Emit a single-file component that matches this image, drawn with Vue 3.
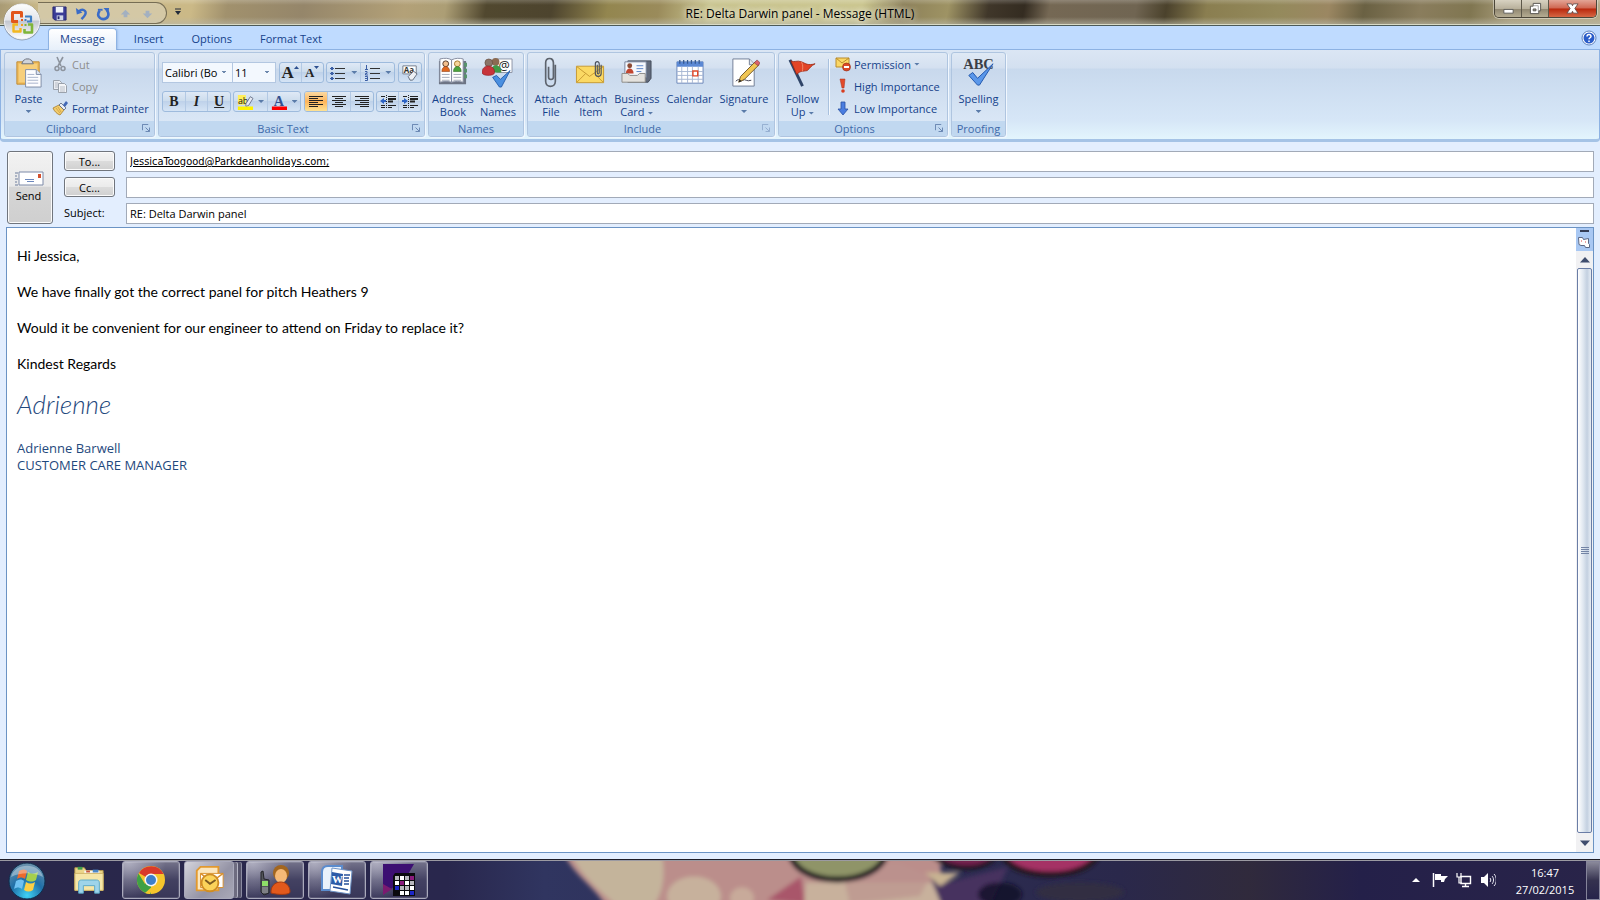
<script setup>
import { ref } from 'vue'

const tabs = ['Message', 'Insert', 'Options', 'Format Text']
const activeTab = ref('Message')
const font = ref('Calibri (Bo')
const size = ref('11')
const to = ref('JessicaToogood@Parkdeanholidays.com;')
const cc = ref('')
const subject = ref('RE: Delta Darwin panel')
const paragraphs = [
  'Hi Jessica,',
  'We have finally got the correct panel for pitch Heathers 9',
  'Would it be convenient for our engineer to attend on Friday to replace it?',
  'Kindest Regards',
]
</script>

<template>
  <div class="window">
    <header class="titlebar">
      <button class="orb" aria-label="Office Button">
        <svg viewBox="0 0 40 40" width="40" height="40">
          <defs>
            <linearGradient id="orbFill" x1="0" y1="0" x2="0" y2="1">
              <stop offset="0" stop-color="#fdfdfd" /><stop offset=".45" stop-color="#e3e5ea" />
              <stop offset=".5" stop-color="#c4c8d1" /><stop offset="1" stop-color="#fff" />
            </linearGradient>
          </defs>
          <circle cx="20" cy="20" r="18.5" fill="#6f7684" opacity=".6" />
          <circle cx="20" cy="19.5" r="17.5" fill="url(#orbFill)" stroke="#f5f6f8" />
          <g fill="none" stroke-linejoin="round">
            <path d="M16 19.500H10.500V10.500h9v5" stroke="#e2561c" stroke-width="3" />
            <path d="M16 22.500h-4.500v7h7V26" stroke="#f3b81f" stroke-width="2.400" />
            <path d="M23 14.500h6v5h-4" stroke="#3f7fc4" stroke-width="2.200" />
            <path d="M26 22.500h4v8h-7.500V27" stroke="#7fb53a" stroke-width="2.600" />
          </g>
          <path d="M19 17h2v2h-2z" fill="#e2561c" /><path d="M22.500 17h2v2h-2z" fill="#3f7fc4" /><path d="M19 22h2v2h-2z" fill="#f3a01f" /><path d="M22.500 22h2v2h-2z" fill="#7fb53a" />
        </svg>
      </button>
      <nav class="quick" aria-label="Quick Access Toolbar">
        <button aria-label="Save">
          <svg viewBox="0 0 16 16"><path d="M1 1h14v14H3l-2-2z" fill="#3a3b96" stroke="#26276f" /><path d="M4 1h8v6H4z" fill="#eef1fa" /><path d="M5 10h7v5H5z" fill="#cfd5e8" /><path d="M6 11h2v3H6z" fill="#26276f" /></svg>
        </button>
        <button aria-label="Undo">
          <svg viewBox="0 0 16 16"><path d="M5 6c4-4 9-1 7 3-1 2-2 3-4 5" fill="none" stroke="#3b6cc7" stroke-width="2.6" /><path d="M2 2l1 7 6-2z" fill="#3b6cc7" /></svg>
        </button>
        <button aria-label="Redo">
          <svg viewBox="0 0 16 16"><path d="M4 5c-4 5 0 9 4 9s7-4 4-9" fill="none" stroke="#3b6cc7" stroke-width="2.8" /><path d="M8 2h6l-1 6z" fill="#3b6cc7" /><path d="M2 3h5v2H2z" fill="#3b6cc7" /></svg>
        </button>
        <button aria-label="Previous Item" disabled>
          <svg viewBox="0 0 16 16"><path d="M8 4l5 5h-3v3H6V9H3z" fill="#a3b0c0" /></svg>
        </button>
        <button aria-label="Next Item" disabled>
          <svg viewBox="0 0 16 16"><path d="M8 13L3 8h3V5h4v3h3z" fill="#a3b0c0" /></svg>
        </button>
      </nav>
      <button class="quick-more" aria-label="Customize Quick Access Toolbar">
        <svg viewBox="0 0 8 8" width="8" height="8"><path d="M1 1h6" stroke="#222b3a" /><path d="M1 3h6L4 7z" fill="#222b3a" /></svg>
      </button>
      <h1>RE: Delta Darwin panel - Message (HTML)</h1>
      <div class="controls">
        <button aria-label="Minimize"><svg viewBox="0 0 14 14"><path d="M2 8h10v4H2z" fill="#fff" stroke="#5c5a55" /></svg></button>
        <button aria-label="Restore"><svg viewBox="0 0 14 14"><path d="M4.500 1.500h8v8h-2v3h-9v-8h3z" fill="#fff" stroke="#55534e" /><path d="M4.500 7.500h3v2h-3z" fill="#9b968a" stroke="#55534e" /><path d="M5 4h5v6" fill="none" stroke="#777" stroke-width=".7" /></svg></button>
        <button class="close" aria-label="Close"><svg viewBox="0 0 14 14"><path d="M1 2h5l1 2 1-2h5L9.500 7l3.500 5H8l-1-2-1 2H1l3.500-5z" fill="#fff" stroke="#5c4644" stroke-width=".9" /></svg></button>
      </div>
    </header>

    <nav class="tabs">
      <button v-for="t in tabs" :key="t" :class="{ active: t === activeTab }" @click="activeTab = t">{{ t }}</button>
      <button class="help" aria-label="Help">
        <svg viewBox="0 0 16 16" width="16" height="16"><circle cx="8" cy="8" r="7" fill="#fff" stroke="#5f82bd" /><circle cx="8" cy="8" r="5.500" fill="#2a5cc9" /><path d="M6 6.500c0-3 4.200-2.500 4 0-.2 1.300-2 1.300-2 2.800M8 10.500v1.500" fill="none" stroke="#fff" stroke-width="1.500" /></svg>
      </button>
    </nav>

    <div class="ribbon">
      <section class="group clipboard">
        <div class="content">
          <button class="big">
            <svg viewBox="0 0 32 32">
              <path d="M4 5h23v23H4z" fill="#f0bd5c" stroke="#c08a35" /><path d="M6 7h19v19H6z" fill="#f7cf7c" />
              <path d="M10 5c0-2 3-2 3-3h4c0 1 3 1 3 3l1 2H9z" fill="#cfd3da" stroke="#6c727d" />
              <path d="M13 13h11l5 5v13H13z" fill="#fdfdff" stroke="#7f8ca6" /><path d="M24 13v5h5" fill="#dbe3f2" stroke="#7f8ca6" />
              <path d="M15 18h7M15 21h11M15 24h11M15 27h11" stroke="#a8b4cb" />
            </svg>
            <span>Paste</span><i class="caret"></i>
          </button>
          <div class="stack">
            <button disabled>
              <svg viewBox="0 0 16 16"><path d="M5 1l4 9M11 1L6 10" stroke="#8d949e" stroke-width="1.600" /><circle cx="5" cy="12.500" r="2" fill="none" stroke="#8d949e" stroke-width="1.500" /><circle cx="11" cy="12.500" r="2" fill="none" stroke="#8d949e" stroke-width="1.500" /></svg>
              Cut
            </button>
            <button disabled>
              <svg viewBox="0 0 16 16"><path d="M1.500 2.500h6l2 2v7h-8z" fill="#e9ecf1" stroke="#9aa1ab" /><path d="M6.500 5.500h6l2 2v7h-8z" fill="#f4f5f8" stroke="#9aa1ab" /><path d="M3 5h3M3 7h3M3 9h3M8 9h5M8 11h5M8 13h5" stroke="#a9b0ba" stroke-width=".8" /></svg>
              Copy
            </button>
            <button>
              <svg viewBox="0 0 16 16"><path d="M1 8l6-3 5 5-4 5c-3-1-6-4-7-7z" fill="#f3cd6d" stroke="#a67c2c" stroke-width=".8" /><path d="M7 5l2-2 5 5-2 2z" fill="#e9edf5" stroke="#56627c" stroke-width=".8" /><path d="M11 5l3-4 2 2-3 4z" fill="#4167b5" /><path d="M4 8l4 5M6 7l3 5" stroke="#c6963c" stroke-width=".7" /></svg>
              Format Painter
            </button>
          </div>
        </div>
        <footer class="expands">Clipboard<svg class="launcher" viewBox="0 0 9 9"><path d="M.5 7V.5H7M4 4l4 4M8.500 4v4.500H4" /></svg></footer>
      </section>

      <section class="group basic">
        <div class="content">
          <div class="row">
            <div class="pickers">
              <select v-model="font" class="font" aria-label="Font"><option>Calibri (Bo</option></select>
              <select v-model="size" class="size" aria-label="Font size"><option>11</option></select>
            </div>
            <div class="cluster grow">
              <button aria-label="Grow Font" class="serif"><b class="lg">A</b><svg class="tip" viewBox="0 0 5 3"><path d="M0 3h5L2.500 0z" fill="#2d4f8f" /></svg></button>
              <button aria-label="Shrink Font" class="serif"><b class="sm">A</b><svg class="tip" viewBox="0 0 5 3"><path d="M0 0h5L2.500 3z" fill="#2d4f8f" /></svg></button>
            </div>
            <div class="cluster lists">
              <button aria-label="Bullets"><svg viewBox="0 0 16 16"><path d="M5 3.500h10M5 8.500h10M5 13.500h10" stroke="#333" /><path d="M1 2h2v3H1zM0 3h4v1H0zM1 7h2v3H1zM0 8h4v1H0zM1 12h2v3H1zM0 13h4v1H0z" fill="#3c5fa5" /></svg><i class="caret"></i></button>
              <button aria-label="Numbering"><svg viewBox="0 0 16 16"><path d="M6 3.500h10M6 8.500h10M6 13.500h10" stroke="#333" /><path d="M2.500 0v4M1 4.500h3M1 6.500h2v2H1.500v1.500H4M1 11.500h2.500v4H1M1 13.500h2" fill="none" stroke="#3c5fa5" /></svg><i class="caret"></i></button>
            </div>
            <div class="cluster clear">
              <button aria-label="Clear Formatting"><svg viewBox="0 0 18 18"><path d="M1 1h15v9H1z" fill="#fff" stroke="#6d7585" /><text x="2" y="9" font-size="9" font-weight="700" fill="#333">Aa</text><path d="M7 13l6-6 4 3-5 7H9z" fill="#eef0f5" stroke="#5e6675" /></svg></button>
            </div>
          </div>
          <div class="row">
            <div class="cluster biu">
              <button aria-label="Bold" class="serif"><b>B</b></button>
              <button aria-label="Italic" class="serif"><b><em>I</em></b></button>
              <button aria-label="Underline" class="serif"><b><u>U</u></b></button>
            </div>
            <div class="cluster colors">
              <button aria-label="Highlight"><svg viewBox="0 0 18 18"><path d="M1 1h9v11H1z" fill="#ffef5a" /><text x="1" y="11" font-size="10" fill="#111">ab</text><path d="M10 11l5-8 3 2-5 8-3 1z" fill="#e6eaf2" stroke="#59627a" stroke-width=".9" /><path d="M1 14h17v4H1z" fill="#fff200" /></svg><i class="caret"></i></button>
              <button aria-label="Font Color"><svg viewBox="0 0 18 18"><text x="3" y="13" font-size="16" font-weight="700" fill="#34518f" class="glyph">A</text><path d="M1 14h17v4H1z" fill="#f00" /></svg><i class="caret"></i></button>
            </div>
            <div class="cluster align">
              <button aria-label="Align Left" class="on"><svg viewBox="0 0 16 14"><path d="M1 1.500h14M1 3.500h9M1 5.500h14M1 7.500h9M1 9.500h14M1 11.500h9" stroke="#222" /></svg></button>
              <button aria-label="Center"><svg viewBox="0 0 16 14"><path d="M1 1.500h14M4 3.500h8M1 5.500h14M4 7.500h8M1 9.500h14M4 11.500h8" stroke="#222" /></svg></button>
              <button aria-label="Align Right"><svg viewBox="0 0 16 14"><path d="M1 1.500h14M6 3.500h9M1 5.500h14M6 7.500h9M1 9.500h14M6 11.500h9" stroke="#222" /></svg></button>
            </div>
            <div class="cluster indent">
              <button aria-label="Decrease Indent"><svg viewBox="0 0 16 14"><path d="M1 1.500h4M8 1.500h8M8 4h8M8 6.500h5M1 10.500h4M8 10.500h8M1 12.500h4M8 12.500h4" stroke="#222" /><path d="M8 4h8M8 6.500h5" stroke="#222" stroke-width="2" /><path d="M6.500 0v14" stroke="#222" stroke-dasharray="1 1" /><path d="M0 6l4-3v2h2v2H4v2z" fill="#2d63c4" /></svg></button>
              <button aria-label="Increase Indent"><svg viewBox="0 0 16 14"><path d="M1 1.500h4M8 1.500h8M8 4h8M8 6.500h5M1 10.500h4M8 10.500h8M1 12.500h4M8 12.500h4" stroke="#222" /><path d="M8 4h8M8 6.500h5" stroke="#222" stroke-width="2" /><path d="M6.500 0v14" stroke="#222" stroke-dasharray="1 1" /><path d="M6 6L2 3v2H0v2h2v2z" fill="#2d63c4" /></svg></button>
            </div>
          </div>
        </div>
        <footer class="expands">Basic Text<svg class="launcher" viewBox="0 0 9 9"><path d="M.5 7V.5H7M4 4l4 4M8.500 4v4.500H4" /></svg></footer>
      </section>

      <section class="group names">
        <div class="content">
          <button class="big">
            <svg viewBox="0 0 32 32">
              <path d="M2 4h28v24H2z" fill="#6d7484" /><path d="M28 6h3v4h-3zM28 12h3v4h-3zM28 18h3v4h-3z" fill="#57946b" />
              <path d="M3 2c5-1 9-1 12 1v23c-3-1-8-1-12 0zM15 3c4-2 8-2 12-1v24c-4-1-8-1-12 0z" fill="#fff" stroke="#868da0" />
              <path d="M5 18h8M5 21h8M5 24h8M17 18h8M17 21h8M17 24h8" stroke="#a2a9b8" />
              <circle cx="9" cy="7" r="3" fill="#f3c08d" stroke="#553b2c" /><path d="M5 15c0-7 8-7 8 0z" fill="#e0671d" stroke="#8b3c12" stroke-width=".6" />
              <circle cx="21" cy="7" r="3" fill="#f6d59b" stroke="#a57a2c" /><path d="M17 15c0-7 8-7 8 0z" fill="#4ba33c" stroke="#2a6c21" stroke-width=".6" />
            </svg>
            <span>Address<br>Book</span>
          </button>
          <button class="big">
            <svg viewBox="0 0 32 32">
              <path d="M15 2h16v14H15z" fill="#fff" stroke="#8e96a7" /><text x="17" y="13" font-size="13" fill="#222">@</text>
              <circle cx="14" cy="5" r="4" fill="#8b6a52" /><path d="M9 16c0-10 11-10 11 0z" fill="#3f9a46" />
              <circle cx="7" cy="6" r="4" fill="#8a7468" stroke="#5d4233" stroke-width=".6" /><path d="M0 16c0-9 13-9 13 0 0 4-13 4-13 0z" fill="#c7343a" stroke="#8b2025" stroke-width=".6" />
              <path d="M11 21l4-2 4 4 10-9-9 17h-2z" fill="#4a8fe0" stroke="#1f58a8" stroke-width=".9" />
            </svg>
            <span>Check<br>Names</span>
          </button>
        </div>
        <footer>Names</footer>
      </section>

      <section class="group include">
        <div class="content">
          <button class="big">
            <svg viewBox="0 0 32 32"><path d="M14 10v11c0 3 5 3 5 0V6c0-6-8-6-8 0v19c0 7 10 7 10 0V8" fill="none" stroke="#5d636d" stroke-width="1.700" /></svg>
            <span>Attach<br>File</span>
          </button>
          <button class="big">
            <svg viewBox="0 0 32 32"><path d="M1.500 9.500h28v17h-28z" fill="#fbd964" stroke="#c79a33" /><path d="M2 10l13 10L29 10M2 26l9-9M29 26l-9-9" fill="none" stroke="#c79a33" /><path d="M23 8v8c0 2 2 2 2 0V7c0-3-4-3-4 0v10c0 4 6 4 6 0V8" fill="none" stroke="#4b525e" stroke-width="1.200" /></svg>
            <span>Attach<br>Item</span>
          </button>
          <button class="big">
            <svg viewBox="0 0 32 32"><path d="M7 4h24v18l-3 4H7z" fill="#626b7c" stroke="#454d5c" /><path d="M4 5h22v16H4z" fill="#f5f8fd" stroke="#76829b" /><circle cx="9" cy="9" r="2.500" fill="#8b4b35" /><path d="M5 17c0-7 8-7 8 0z" fill="#c2452f" /><path d="M16 9h7M16 12h7M16 15h5" stroke="#5c86c8" /><path d="M1 17h6l2 2h8l2-2h6v9H1z" fill="#e4e2de" stroke="#8d8b88" /></svg>
            <span>Business<br>Card <i class="caret"></i></span>
          </button>
          <button class="big">
            <svg viewBox="0 0 32 32"><path d="M3 5h27v22H3z" fill="#fff" stroke="#6b86b9" /><path d="M3 5h27v5H3z" fill="#5b88d4" /><path d="M6 3v4M10 3v4M14 3v4M18 3v4M22 3v4M26 3v4" stroke="#35588f" stroke-width="1.300" /><path d="M3 15h27M3 19h27M3 23h27M8 10v17M14 10v17M19 10v17M25 10v17" stroke="#a8b8d4" /><path d="M19.500 14.500h5v5h-5z" fill="#fff" stroke="#e0482a" stroke-width="1.500" /></svg>
            <span>Calendar</span>
          </button>
          <button class="big">
            <svg viewBox="0 0 32 32"><path d="M4 2h17l5 5v23H4z" fill="#fff" stroke="#737f97" /><path d="M21 2v6h5" fill="#dfe5f0" stroke="#737f97" /><path d="M7 25c4-4 4 1 7-1s4 2 9 0" fill="none" stroke="#445" /><path d="M10 26l2-6L27 5l4 3-15 15z" fill="#f1c653" stroke="#74592b" /><path d="M26 6l3-3 3 3-2 3z" fill="#d9606a" stroke="#7e3940" stroke-width=".6" /><path d="M10 26l1-3 2 2z" fill="#222" /></svg>
            <span>Signature</span><i class="caret"></i>
          </button>
        </div>
        <footer class="expands">Include<svg class="launcher dim" viewBox="0 0 9 9"><path d="M.5 7V.5H7M4 4l4 4M8.500 4v4.500H4" /></svg></footer>
      </section>

      <section class="group options">
        <div class="content">
          <button class="big">
            <svg viewBox="0 0 32 32"><path d="M3 3l13 27" stroke="#2f4468" stroke-width="3" /><path d="M4 4c4 2 6-1 11 1s6 4 14 2c-4 2-6 5-8 7-5 1-7 0-11 4z" fill="#e24527" stroke="#99260f" stroke-width=".8" /><path d="M15 5c2 4 1 7 1 10" stroke="#f08a6a" fill="none" /></svg>
            <span>Follow<br>Up <i class="caret"></i></span>
          </button>
          <div class="rule"></div>
          <div class="stack">
            <button>
              <svg viewBox="0 0 16 16"><path d="M1 2h13v9H1z" fill="#fbd766" stroke="#b98b2b" /><path d="M1 2l6 5 7-5" fill="none" stroke="#b98b2b" /><circle cx="11.500" cy="11" r="4" fill="#dd4826" stroke="#8d2a15" stroke-width=".6" /><path d="M9 10h5v2H9z" fill="#fff" /></svg>
              Permission<i class="caret"></i>
            </button>
            <button>
              <svg viewBox="0 0 16 16"><path d="M5 1h5L9 10H7z" fill="#e24a2b" stroke="#a9301a" stroke-width=".5" /><circle cx="8" cy="13" r="1.800" fill="#d73d20" /></svg>
              High Importance
            </button>
            <button>
              <svg viewBox="0 0 16 16"><path d="M6 2h4v7h3l-5 6-5-6h3z" fill="#4a7de0" stroke="#2a51a3" stroke-width=".8" /></svg>
              Low Importance
            </button>
          </div>
        </div>
        <footer class="expands">Options<svg class="launcher" viewBox="0 0 9 9"><path d="M.5 7V.5H7M4 4l4 4M8.500 4v4.500H4" /></svg></footer>
      </section>

      <section class="group proofing">
        <div class="content">
          <button class="big">
            <svg viewBox="0 0 32 32"><text x="16" y="12" font-size="15" font-weight="700" text-anchor="middle" fill="#3b3f47" class="glyph">ABC</text><path d="M6 19l4-3 5 6L31 7 17 29h-2z" fill="#5a97ea" stroke="#2157ab" /></svg>
            <span>Spelling</span><i class="caret"></i>
          </button>
        </div>
        <footer>Proofing</footer>
      </section>
    </div>

    <main>
      <form class="fields" @submit.prevent>
        <button class="send" type="submit">
          <svg viewBox="0 0 30 16" width="30" height="16"><path d="M5 1h24v13H5z" fill="#fff" stroke="#7c8aa8" /><path d="M1 2h3M1 5h2M1 8h3M1 11h2M1 14h3" stroke="#6d7c9c" /><path d="M24 3h3v4h-3z" fill="#d4502d" /><path d="M11 8.500h9M13 10.500h7" stroke="#6c88bd" /></svg>
          <span>Send</span>
        </button>
        <button id="to-label" class="pick" type="button">To...</button>
        <input v-model="to" class="recipient" aria-labelledby="to-label">
        <button id="cc-label" class="pick" type="button">Cc...</button>
        <input v-model="cc" aria-labelledby="cc-label">
        <label for="subject">Subject:</label>
        <input id="subject" v-model="subject">
      </form>
      <div class="editor">
        <article role="textbox" aria-label="Message body" aria-multiline="true">
          <p v-for="p in paragraphs" :key="p">{{ p }}</p>
          <p class="script">Adrienne</p>
          <p class="signoff">Adrienne Barwell<br>CUSTOMER CARE MANAGER</p>
        </article>
        <div class="scroll">
          <div class="split"><svg viewBox="0 0 16 22" width="16" height="22"><path d="M4 3h9" stroke="#333c55" stroke-width="2" /><path d="M2.500 9.500h4l1 2 5-1v5l1 1v3h-4l-1-2H5l-2-1z" fill="#fff" stroke="#5c6885" /><path d="M5 13h1M9 14h1" stroke="#d44" /></svg></div>
          <button aria-label="Scroll up"><svg viewBox="0 0 10 6" width="10" height="6"><path d="M0 5.500h10L5 0z" fill="#3f4d6e" /></svg></button>
          <div class="thumb"><i></i></div>
          <button aria-label="Scroll down"><svg viewBox="0 0 10 6" width="10" height="6"><path d="M0 .5h10L5 6z" fill="#3f4d6e" /></svg></button>
        </div>
      </div>
    </main>

    <footer class="taskbar">
      <svg class="wallpaper" viewBox="0 0 1600 40" preserveAspectRatio="none">
        <defs>
          <filter id="soft" x="-5%" y="-50%" width="110%" height="200%"><feGaussianBlur stdDeviation="2" /></filter>
          <linearGradient id="night"><stop offset="0" stop-color="#29274a" /><stop offset=".28" stop-color="#29274d" /><stop offset=".34" stop-color="#303560" /><stop offset=".7" stop-color="#2a284b" /><stop offset=".78" stop-color="#302a3c" /><stop offset=".85" stop-color="#242049" /><stop offset="1" stop-color="#292449" /></linearGradient>
        </defs>
        <rect width="1600" height="40" fill="url(#night)" />
        <g filter="url(#soft)">
          <path d="M565 -5h375l3 50H605c-10-18-28-28-40-50z" fill="#bb8e8b" />
          <path d="M572 -5h90c4 20 0 40-8 50h-38c-20-18-34-30-44-50z" fill="#c4b49b" />
          <ellipse cx="694" cy="36" rx="27" ry="20" fill="#c7b19c" />
          <ellipse cx="742" cy="38" rx="12" ry="11" fill="#c8aa9a" />
          <path d="M767 40l34-24 4 28z" fill="#a9566b" />
          <path d="M806 22l80 0 54 0v24H804z" fill="#c8b19c" />
          <path d="M840 2h60l30 14-10 20-70 8z" fill="#bb938e" opacity=".7" />
          <path d="M930 16l18 6 60-16-18 40H942z" fill="#46305f" />
          <path d="M925 12h35l-20 14z" fill="#c8b392" />
          <path d="M790 -8h96c-6 34-88 38-96 0z" fill="#8f9468" stroke="#17131a" stroke-width="6" />
          <path d="M932 -8h65c-8 20-50 20-65 0z" fill="#76244f" stroke="#1d1220" stroke-width="5" />
          <path d="M1002 -8h96c-8 28-86 30-96 0z" fill="#a53365" stroke="#20141f" stroke-width="6" />
          <ellipse cx="1000" cy="34" rx="22" ry="12" fill="#130d28" opacity=".8" />
          <ellipse cx="1080" cy="32" rx="44" ry="10" fill="#332f42" />
        </g>
      </svg>
      <button class="start" aria-label="Start">
        <svg viewBox="0 0 38 38" width="38" height="38">
          <defs><radialGradient id="startFill" cx=".5" cy=".9" r=".9"><stop offset="0" stop-color="#3fd2f6" /><stop offset=".5" stop-color="#1f6fa8" /><stop offset="1" stop-color="#6d93ad" /></radialGradient></defs>
          <circle cx="19" cy="19" r="18" fill="url(#startFill)" stroke="#0e2d4c" />
          <path d="M11 9c3-2 6-2 8 0l-2 8c-3-2-5-2-8 0z" fill="#ec6a2d" /><path d="M20 10c3 2 6 2 10 0l-2 8c-3 2-6 2-10 0z" fill="#a5cf4c" />
          <path d="M8 19c3-2 6-2 8 0l-2 8c-3-2-5-2-8 0z" fill="#6fc1f2" /><path d="M18 20c3 2 6 2 9 0l-2 8c-3 2-6 2-9 0z" fill="#fbcf45" />
          <path d="M3 15C7 0 31 0 35 15c-10-5-22-5-32 0z" fill="#fff" opacity=".35" />
        </svg>
      </button>
      <button class="task pinned" aria-label="Windows Explorer">
        <svg viewBox="0 0 34 32"><path d="M2 3h10l2 3h18v21H2z" fill="#ecd68a" stroke="#b79a4b" /><path d="M5 2h5v3H5z" fill="#3c9a4b" /><path d="M12 6h16v5H12z" fill="#f7f7f3" /><path d="M14 6h4v2h-4z" fill="#c9543c" /><path d="M21 5h6v3h-6z" fill="#4a86c8" /><path d="M2 9h30v18H2z" fill="#f6e6a8" stroke="#cfb467" /><path d="M6 30V19c0-2 1-3 3-3h16c2 0 3 1 3 3v11h-5v-8H11v8z" fill="#9ed4ea" stroke="#5aa7c6" /></svg>
      </button>
      <button class="task" aria-label="Google Chrome">
        <svg viewBox="0 0 32 32"><circle cx="16" cy="16" r="14" fill="#f5c52c" /><path d="M16 16L4 9a14 14 0 0 1 24.500 1H16z" fill="#d93a2b" /><path d="M16 16v14A14 14 0 0 1 3.500 9.500L10 20z" fill="#3fa045" /><path d="M20 20l-5 10a14 14 0 0 1-5-1z" fill="#f5c52c" /><circle cx="16" cy="16" r="6.500" fill="#f3f5f8" /><circle cx="16" cy="16" r="5" fill="#3d7fca" /></svg>
      </button>
      <button class="task current" aria-label="Outlook">
        <svg viewBox="0 0 34 32"><path d="M4 6l4-4h19v25H4z" fill="#fbe6bd" stroke="#e1992f" stroke-width="2" /><path d="M8 9h24v15H8z" fill="#fff" stroke="#d9902c" /><path d="M8 9l12 9L32 9" fill="none" stroke="#d9902c" stroke-width="1.500" /><circle cx="18" cy="19" r="9" fill="#fbd35a" stroke="#cf8d24" stroke-width="2" /><path d="M13 16l5 4 6-4" fill="none" stroke="#7b5a22" stroke-width="2" /></svg>
      </button>
      <button class="task" aria-label="Phone contacts">
        <svg viewBox="0 0 32 32"><circle cx="22" cy="9" r="8" fill="#a3661f" /><ellipse cx="22" cy="12" rx="6" ry="7" fill="#f5b977" /><path d="M12 29c-1-14 19-15 19-1 0 3-12 3-19 1z" fill="#e2591c" stroke="#a83b10" /><path d="M2 8l2-1 1 8 5 1v13l-5 2-3-3V14z" fill="#54565c" stroke="#232428" /><path d="M3 17h6v5H3z" fill="#8edf68" /><path d="M3 24h6M3 26h6M3 28h6" stroke="#a7a9ad" /></svg>
      </button>
      <button class="task" aria-label="Word">
        <svg viewBox="0 0 32 32"><path d="M1 8c0-4 2-6 6-6h14v24H1z" fill="#e9f1fb" stroke="#5b8cce" stroke-width="2" /><path d="M11 4l20 3-2 23-20-3z" fill="#fff" stroke="#6f93c6" /><path d="M11 8l11 2-1 12-11-2z" fill="#2c5ba8" /><text x="11" y="19" font-size="11" font-weight="700" fill="#fff" class="glyph">W</text><path d="M23 11h6M23 14h5M23 17h5M23 20h5M12 23l15 3" stroke="#26509a" stroke-width="1.500" /></svg>
      </button>
      <button class="task" aria-label="Database">
        <svg viewBox="0 0 32 32"><path d="M0 0h31l-8 14L4 28H0z" fill="#3c0f72" /><path d="M0 31V20l9 5z" fill="#7b1a70" /><path d="M12 9h20v23H10V12z" fill="#0a0a0e" /><g fill="#fff"><path d="M17 12h4v4h-4zM22 17h4v4h-4zM27 22h4v4h-4zM12 17h4v4h-4zM17 27h4v4h-4zM22 27h4v4h-4z" /></g><path d="M12 12h4v4h-4zM22 12h4v4h-4zM27 17h4v4h-4zM17 22h4v4h-4zM22 22h4v4h-4z" fill="#b7b7bd" /><path d="M27 12h4v4h-4zM17 17h4v4h-4z" fill="#8a1b7d" /><path d="M12 22h4v4h-4zM27 27h4v4h-4z" fill="#1d27c8" /></svg>
      </button>
      <div class="tray">
        <button aria-label="Show hidden icons"><svg viewBox="0 0 16 16"><path d="M4 10h8L8 6z" fill="#fff" /></svg></button>
        <button aria-label="Action Center"><svg viewBox="0 0 16 16"><path d="M1.500 1v14" stroke="#fff" stroke-width="1.500" /><path d="M3 2h6v2h7l-3 3-1 3H9V8H3z" fill="#fff" /></svg></button>
        <button aria-label="Network"><svg viewBox="0 0 16 16"><path d="M5 4.500h9.500v7H5zM9.500 12v2M6 14.500h7" fill="none" stroke="#fff" stroke-width="1.400" /><path d="M1 1v4h4V1M3 5v6h3" fill="none" stroke="#fff" stroke-width="1.200" /></svg></button>
        <button aria-label="Volume"><svg viewBox="0 0 16 16"><path d="M1 5h3l4-4v14l-4-4H1z" fill="#fff" /><path d="M10 6c1 1 1 3 0 4M12 4c2 2 2 6 0 8M14 2c3 3 3 9 0 12" fill="none" stroke="#e8e8f2" /></svg></button>
        <time datetime="2015-02-27T16:47">16:47<br>27/02/2015</time>
      </div>
      <button class="desktop" aria-label="Show desktop"></button>
    </footer>
  </div>
</template>

<style>
body { margin: 0; }
</style>

<style scoped>
* { box-sizing: border-box; }
.window {
  height: 100vh; display: flex; flex-direction: column; overflow: hidden;
  background: #e3eefe; color: #000; font: 11px/13px "Open Sans", "Noto Sans", sans-serif;
}
button, input, select { font: inherit; color: inherit; margin: 0; }
button { border: 0; padding: 0; background: none; white-space: nowrap; }
h1, p { margin: 0; font-weight: 400; }

.titlebar {
  position: relative; flex: none; height: 26px; display: flex; align-items: flex-start;
  border-bottom: 1px solid #4c5a58; box-shadow: inset 0 -1px #d8dac6;
  background:
    linear-gradient(180deg, #fff3 0, #fff0 5px, #fff0 17px, #b9b7a699 24px),
    linear-gradient(100deg, #a89a74 0, #c9b888 40px, #cbb987 190px, #a1916d 225px, #95866a 300px, #b3a178 400px, #ac9e75 440px, #51482f 480px, #4d442e 545px, #93864f 600px, #9a8b5b 650px, #c9c48f 700px, #cbc68f 850px, #8c8058 890px, #9e9364 935px, #40372a 975px, #342c21 1010px, #756854 1035px, #706552 1120px, #4b422c 1150px, #8a7e50 1190px, #948a5c 1260px, #9b8762 1310px, #6a6143 1345px, #8a7d5d 1400px, #807651 1450px, #a99d7b 1490px, #b5ab8a 100%);
}
.orb { position: absolute; left: 2px; top: 2px; z-index: 2; width: 40px; height: 40px; }
.orb svg { display: block; }
.quick {
  display: flex; align-items: center; gap: 6px; height: 22px; margin: 2px 0 0 38px; padding: 0 10px 0 14px;
  border: 1px solid #766d54; border-left: 0; border-radius: 0 12px 12px 0; background: #ddd8c480;
}
.quick button { width: 16px; height: 16px; }
.quick svg { display: block; width: 15px; height: 15px; }
.quick-more { margin: 8px 0 0 7px; height: 8px; }
.quick-more svg { display: block; }
.titlebar h1 {
  position: absolute; left: 50%; top: 6px; transform: translateX(-50%); font-size: 12px; line-height: 16px; white-space: nowrap;
  text-shadow: 0 0 6px #fff, 0 0 8px #fff8;
}
.controls { display: flex; margin: 0 3px 0 auto; height: 18px; border: 1px solid #4b4639; border-top: 0; border-radius: 0 0 5px 5px; overflow: hidden; box-shadow: 0 0 0 1px #fff6; }
.controls button { width: 27px; height: 17px; border-right: 1px solid #5d584a; background: linear-gradient(#d8d2c2, #b9b19c 50%, #8f8670 52%, #b5ac92); }
.controls svg { width: 13px; height: 13px; display: block; margin: 2px auto; }
.controls .close { width: 47px; border: 0; background: linear-gradient(#e3a596, #cf6650 48%, #b9270c 52%, #d66744); }

.tabs { flex: none; height: 24px; padding: 2px 3px 0 48px; display: flex; background: #bfdbff; border-bottom: 1px solid #8db2e3; }
.tabs button { height: 22px; padding: 0 11px 2px; margin-right: 6px; color: #15428b; }
.tabs .active { background: linear-gradient(#fff, #e6effa); border: 1px solid #8db2e3; border-bottom: 0; border-radius: 4px 4px 0 0; box-shadow: 1px 0 2px #6b8fc455; }
.tabs .help { margin: 0 0 0 auto; padding: 0; width: 16px; }

.ribbon {
  flex: none; display: flex; gap: 3px; height: 92px; padding: 2px 3px 3px; border: 1px solid #8db2e3; border-top: 0;
  border-bottom: 3px solid #a5c3e6; border-radius: 0 0 4px 4px;
  background: linear-gradient(#dbe6f4 0, #d3e0f0 18px, #c8d9ed 19px, #d6e6f7 70px, #e3f5fd 100%);
}
.group { display: flex; flex-direction: column; height: 85px; border: 1px solid #afc5e0; border-radius: 3px; overflow: hidden; background: linear-gradient(#dfe9f5 0, #d4e0f0 15px, #c8d8ec 16px, #dae7f6 70px); box-shadow: 1px 1px #f1f7fe; }
.group .content { flex: 1; display: flex; color: #15428b; }
.group footer { position: relative; height: 15px; line-height: 16px; text-align: center; background: #c1d8f0; color: #3e6aaa; }
.group .expands { padding-right: 17px; }
.launcher { position: absolute; right: 4px; top: 3px; width: 8px; height: 8px; fill: none; stroke: #5c7ba8; }
.dim { opacity: .5; }
.clipboard { width: 151px; }
.basic { width: 267px; }
.names { width: 96px; }
.include { width: 248px; }
.options { width: 170px; }
.proofing { width: 55px; }

.caret { display: inline-block; width: 6px; height: 3px; background: #5a7ba9; clip-path: polygon(0 0, 100% 0, 50% 100%); vertical-align: middle; }
.big { flex: 1 1 auto; display: flex; flex-direction: column; align-items: center; justify-content: flex-start; padding-top: 4px; line-height: 13px; }
.big svg { width: 31px; height: 31px; margin: 0 0 4px; }
.big > .caret { margin-top: 5px; }
.names .content { padding-right: 4px; }
.include .content { padding: 0 2px 0 3px; }
.clipboard .big, .options .big { flex: none; width: 47px; }
.stack { flex: 1; display: flex; flex-direction: column; }
.stack button { display: flex; align-items: center; gap: 4px; height: 22px; }
.stack svg { width: 16px; height: 16px; }
.stack button:disabled { color: #8d8d8d; }
.rule { width: 2px; margin: 6px 5px 6px 2px; border-left: 1px solid #a9c1de; border-right: 1px solid #f4f8fd; }
.options .stack button { gap: 3px; }

.basic .content { flex-direction: column; gap: 8px; padding: 9px 2px 0 3px; }
.row { display: flex; justify-content: space-between; }
.pickers, .cluster { display: flex; height: 21px; }
.cluster { border: 1px solid #9ebbdd; border-radius: 3px; background: linear-gradient(#dfe9f6, #cddded 45%, #bfd2ea 50%, #d5e4f5); }
.cluster button { flex: 1; display: flex; align-items: center; justify-content: center; gap: 5px; color: #222; }
.cluster button + button { border-left: 1px solid #b3c9e4; }
.cluster svg { width: 16px; height: 16px; overflow: visible; }
.pickers select { appearance: none; border: 1px solid #b3c7e1; border-radius: 0; height: 21px; padding: 0 14px 0 2px; color: #000; background: conic-gradient(from -45deg at 50% 100%, #6e89ae 90deg, transparent 0) right 5px center / 6px 3px no-repeat, #f3f8fe; }
.pickers .font { width: 71px; }
.pickers .size { width: 43px; border-left: 0; }
.grow { width: 45px; }
.lists { width: 69px; }
.clear { width: 24px; }
.biu { width: 69px; }
.colors { width: 68px; }
.align { width: 70px; }
.indent { width: 46px; }
.serif, .glyph { font-family: "Liberation Serif", serif; }
.cluster .serif { font-size: 14px; }
.serif .lg { font-size: 17px; }
.serif .sm { font-size: 13px; }
.cluster.grow button { gap: 0; }
.cluster .tip { width: 5px; height: 3px; margin-bottom: 10px; }
.cluster .on { border-radius: 2px 0 0 2px; background: linear-gradient(#fbd9a2, #fdb55c 50%, #fde294); }
.align svg, .indent svg { height: 14px; }

main { flex: 1; min-height: 0; display: flex; flex-direction: column; padding: 9px 6px 6px; }
.fields { display: grid; grid-template-columns: 46px 51px 1fr; grid-auto-rows: 21px; gap: 5px 11px; padding-left: 1px; margin-bottom: 3px; }
.send { grid-row: 1 / 4; display: flex; flex-direction: column; align-items: center; justify-content: center; gap: 2px; border: 1px solid #70757d; border-radius: 3px; background: linear-gradient(#f2f2f2, #e9e9e9 48%, #d6d6d6 50%, #cfcfcf); box-shadow: inset 0 0 0 1px #fbfbfb; }
.send { padding: 0 3px 2px 0; }
.pick { height: 20px; border: 1px solid #70757d; border-radius: 3px; background: linear-gradient(#f3f3f3, #ebebeb 48%, #dcdcdc 50%, #d0d0d0); box-shadow: inset 0 0 0 1px #fbfbfb; }
.fields label { line-height: 20px; }
.fields input { min-width: 0; height: 21px; border: 1px solid #a2aab8; padding: 0 3px; background: #fff; outline: 0; }
.fields .recipient { text-decoration: underline; font-family: "DejaVu Sans Condensed", "Open Sans", sans-serif; }
.editor { flex: 1; min-height: 0; display: flex; border: 1px solid #6b93c4; background: #fff; }
article { flex: 1; padding: 19px 10px; font: 14px/18px Lato, "Open Sans", sans-serif; }
article p { margin-bottom: 18px; }
article .script { margin: 0 0 23px; font: italic 300 26px/26px "Bradley Hand ITC", Lato, cursive; color: #1f497d; }
article .signoff { font: 13px/17px "Open Sans", sans-serif; color: #1f497d; }
.scroll { width: 17px; display: flex; flex-direction: column; background: #f1f1f3; }
.scroll .split { height: 23px; background: #a9c8f3; }
.scroll button { height: 17px; display: grid; place-items: center; }
.scroll button:last-child { height: 19px; }
.thumb { flex: 1; display: grid; place-items: center; border: 1px solid #6a7da6; border-radius: 2px; margin: 0 1px; background: linear-gradient(90deg, #fff, #dfe7f0 40%, #c3d0e0 70%, #e6edf5); }
.thumb i { width: 8px; height: 7px; background: repeating-linear-gradient(#7384a5 0 1px, transparent 1px 2px); }

.taskbar { position: relative; flex: none; height: 41px; display: flex; align-items: stretch; padding-left: 8px; border-top: 1px solid #1d1c26; overflow: hidden; background: #9b9aa2; }
.wallpaper { position: absolute; left: 0; top: 1px; width: 100%; height: 39px; }
.taskbar > :not(svg) { position: relative; }
.start { width: 38px; margin-right: 14px; }
.start svg { display: block; margin-top: 1px; }
.task { width: 58px; height: 38px; margin: 1px 4px 0 0; border: 1px solid #a9a9bb; border-radius: 3px; background: radial-gradient(circle at 10% 0, #d9d9e699, #fff0 60%), linear-gradient(#ffffff59, #ffffff1f 50%, #ffffff12); box-shadow: inset 0 0 0 1px #ffffff24; }
.task svg { display: block; width: 32px; height: 32px; margin: auto; }
.pinned { border-color: transparent; background: none; box-shadow: none; }
.current { width: 50px; margin-right: 12px; background: linear-gradient(135deg, #fffc, #ffffff80 60%, #ffffff99); box-shadow: 4px 0 0 -1px #6e6c80, 5px 0 0 -1px #b4b4c4, 8px 0 0 -1px #55536b, 9px 0 0 -1px #8a8aa0; }
.tray { margin-left: auto; display: flex; align-items: center; gap: 8px; color: #fff; }
.tray button, .tray svg { display: block; width: 16px; height: 16px; }
.tray time { width: 82px; padding-top: 1px; text-align: center; line-height: 17px; }
.desktop { width: 14px; margin-top: 1px; border: 1px solid #85849a; background: linear-gradient(#8a899a, #35324f 50%, #26234a); }
</style>
